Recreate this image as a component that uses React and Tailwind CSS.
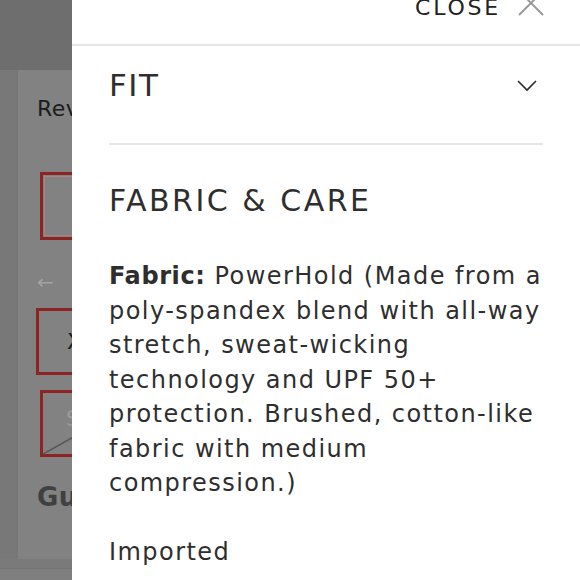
import React from "react";

export default function App() {
  const font = { fontFamily: '"DejaVu Sans", "Open Sans", sans-serif' };
  return (
    <div className="flex w-[580px] h-[580px] overflow-hidden bg-white" style={font}>
      {/* dimmed page behind drawer */}
      <div className="w-[72px] shrink-0 h-full flex flex-col overflow-hidden bg-[#7f7f7f]">
        <div className="h-[70px] shrink-0 bg-[#6e6e6e]" />
        <div className="flex h-[489px] shrink-0">
          <div className="w-[18px] shrink-0 bg-[#787878]" />
          <div className="w-[200px] shrink-0 bg-[#828282] flex flex-col">
            <div className="pl-[19px] pt-[24px] text-[22px] leading-[30px] text-[#1c1c1c] tracking-[0.5px]">Reviews</div>
            <div className="ml-[22px] mt-[48px] w-[90px] h-[68px] border-[3px] border-[#8c2424] p-[1px]">
              <div className="w-full h-full border border-[#a98484]" />
            </div>
            <div className="ml-[19px] mt-[30px] h-[24px] flex items-center text-[#a3a3a3] text-[20px] leading-none">←</div>
            <div className="ml-[18px] mt-[14px] w-[90px] h-[67px] border-[3px] border-[#8c2424] flex items-center pl-[28px] text-[22px] text-[#1a1a1a]">XS</div>
            <div className="relative ml-[22px] mt-[15px] w-[90px] h-[67px] border-[3px] border-[#8c2424] flex items-center pl-[22px] pb-[10px] text-[22px] text-[#9a9a9a]">
              <span className="ml-[1px]">S</span>
              <svg className="absolute left-0 top-0" width="84" height="61" viewBox="0 0 84 61">
                <line x1="0" y1="61" x2="84" y2="14" stroke="#555" strokeWidth="1.5" />
              </svg>
            </div>
            <div className="pl-[19px] pt-[24px] text-[26px] leading-[32px] text-[#404040] font-bold tracking-[0.5px]">Guide</div>
          </div>
        </div>
        <div className="h-[9px] shrink-0 bg-[#7a7a7a]" />
        <div className="h-[1px] shrink-0 bg-[#747474]" />
      </div>

      {/* drawer */}
      <div className="flex-1 h-full flex flex-col bg-white text-[#2e2e2e]">
        <div className="h-[46px] shrink-0 flex items-end justify-end pr-[36px] pb-[25px] border-b-2 border-[#e6e6e6]">
          <span className="text-[22px] leading-none tracking-[2.8px] text-[#222]">CLOSE</span>
          <svg className="ml-[17px] mb-[3px]" width="26" height="26" viewBox="0 0 26 26">
            <path d="M1 1 L25 25 M25 1 L1 25" stroke="#9a9a9a" strokeWidth="2" fill="none" />
          </svg>
        </div>
        <div className="mx-[37px] h-[99px] shrink-0 flex items-center justify-between border-b-2 border-[#e6e6e6]">
          <span className="text-[31px] leading-none tracking-[1.5px] -mt-[18px]">FIT</span>
          <svg className="-mt-[18px] mr-[6px]" width="20" height="12" viewBox="0 0 20 12">
            <path d="M1 1 L10 10 L19 1" stroke="#2a2a2a" strokeWidth="1.6" fill="none" />
          </svg>
        </div>
        <div className="mx-[37px] pt-[36px]">
          <div className="text-[30px] leading-[40px] tracking-[2.5px]">FABRIC &amp; CARE</div>
          <p className="mt-[38px] text-[24px] leading-[34.5px] tracking-[1.45px] whitespace-nowrap">
            <b className="font-bold tracking-[0.6px]">Fabric:</b> PowerHold (Made from a<br />
            poly-spandex blend with all-way<br />
            stretch, sweat-wicking<br />
            technology and UPF 50+<br />
            protection. Brushed, cotton-like<br />
            fabric with medium<br />
            compression.)
          </p>
          <p className="mt-[34px] text-[24px] leading-[34.5px] tracking-[1.45px]">Imported</p>
        </div>
      </div>
    </div>
  );
}
